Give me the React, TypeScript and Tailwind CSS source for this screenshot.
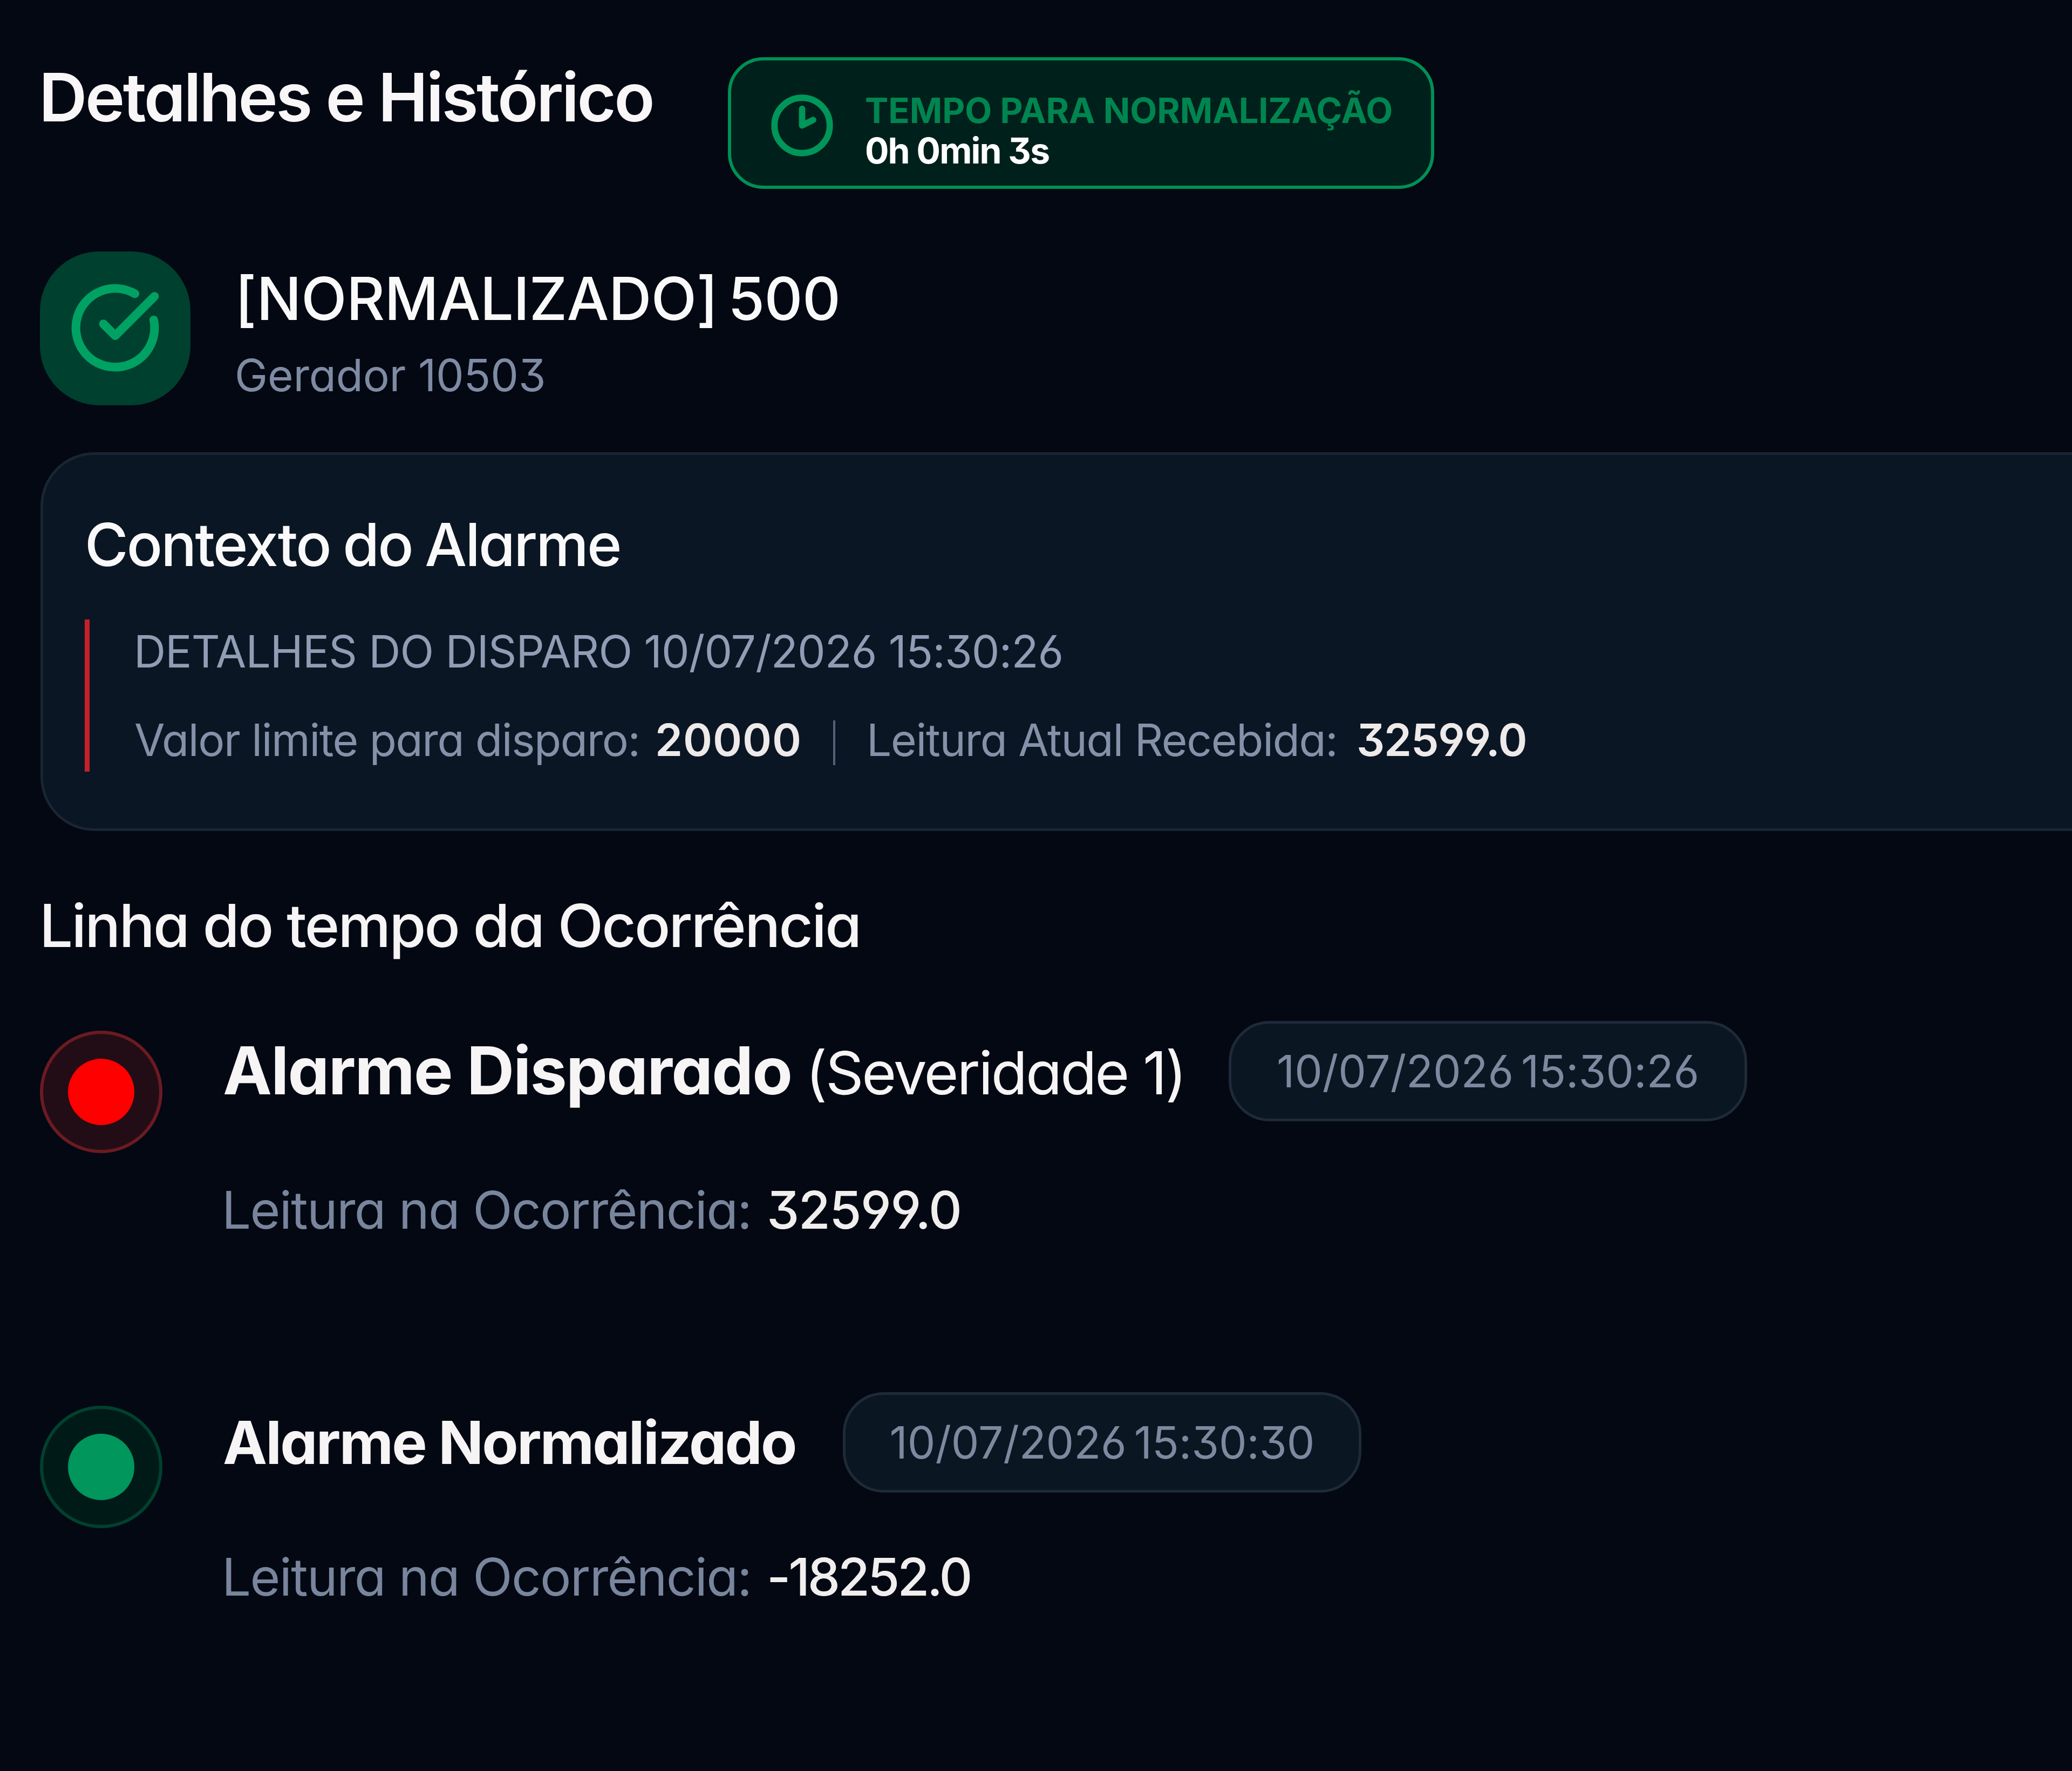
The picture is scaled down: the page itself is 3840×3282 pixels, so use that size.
import React from 'react';
import { CircleCheckBig, Clock2 } from 'lucide-react';

type EventTone = 'fired' | 'normalized';

interface TimelineEvent {
    tone: EventTone;
    title: string;
    severity?: string;
    date: string;
    reading: string;
}

const events: TimelineEvent[] = [
    { tone: 'fired', title: 'Alarme Disparado', severity: '(Severidade 1)', date: '10/07/2026 15:30:26', reading: '32599.0' },
    { tone: 'normalized', title: 'Alarme Normalizado', date: '10/07/2026 15:30:30', reading: '-18252.0' },
];

const Header = () => (
    <header className="flex items-start">
        <h1 className="-ml-[3px] w-[1277px] shrink-0 text-[124px] leading-[148px] font-semibold tracking-[-3.6px] text-[#f8f6f6]">
            Detalhes e Histórico
        </h1>
        <div className="flex h-[244px] w-[1309px] items-start gap-[55px] rounded-[66px] border-[6px] border-[#009055] bg-[#00201b] pl-[70px]">
            <Clock2 className="mt-[59px] size-[123px] shrink-0 text-[#009559]" strokeWidth={2.3} />
            <div className="pt-[55px]">
                <div className="text-[65px] leading-[75px] font-bold tracking-[-0.1px] text-[#008550]">TEMPO PARA NORMALIZAÇÃO</div>
                <div className="text-[66px] leading-[75px] font-bold tracking-[-1.9px] text-white">0h 0min 3s</div>
            </div>
        </div>
    </header>
);

const AlarmSummary = () => (
    <div className="mt-[116px] -ml-px flex gap-[82px]">
        <div className="flex h-[285px] w-[279px] shrink-0 items-center justify-center rounded-[110px] bg-[#00402e]">
            <CircleCheckBig className="mb-[2px] size-[175px] text-[#00a263]" strokeWidth={2.2} />
        </div>
        <div>
            <h2 className="text-[110px] leading-[175px] font-medium tracking-[-0.6px] [word-spacing:-10px] text-[#faf9f9]">
                [NORMALIZADO] 500
            </h2>
            <p className="text-[82px] leading-[109px] tracking-[-0.25px] text-[#7f8ba3]">Gerador 10503</p>
        </div>
    </div>
);

const AlarmContext = () => (
    <section className="mt-[87px] h-[702px] rounded-l-[100px] border-y-[5px] border-l-[5px] border-[#192533] bg-[#0b1624] pt-[106px] pl-[77px]">
        <h2 className="text-[110px] leading-[120px] font-medium tracking-[-2.9px] [word-spacing:-3px] text-[#faf9f9]">Contexto do Alarme</h2>
        <div className="mt-[79px] h-[282px] border-l-[9px] border-[#c5202b] pl-[82px] text-[82px] leading-[120px]">
            <p className="tracking-[-0.9px] text-[#909db4]">DETALHES DO DISPARO 10/07/2026 15:30:26</p>
            <div className="mt-[44px] ml-px flex items-center text-[#8491a8]">
                <span className="w-[965px] shrink-0 tracking-[-1.4px]">Valor limite para disparo:</span>
                <span className="w-[330px] shrink-0 font-semibold tracking-[0.9px] text-[#eeeaea]">20000</span>
                <span className="mt-[8px] h-[83px] w-[4px] shrink-0 bg-[#566174]" />
                <span className="ml-[58px] w-[908px] shrink-0 tracking-[-1.35px]">Leitura Atual Recebida:</span>
                <span className="font-semibold tracking-[-1.2px] text-[#eeeaea]">32599.0</span>
            </div>
        </div>
    </section>
);

const EventMarker: React.FC<{ tone: EventTone }> = ({ tone }) => (
    <div
        className={`flex size-[227px] shrink-0 items-center justify-center rounded-full border-[6px] ${
            tone === 'fired' ? 'mt-[18px] border-[#6c1a22] bg-[#220d16]' : 'mt-[25px] border-[#00412e] bg-[#001a18]'
        }`}
    >
        <div className={`size-[123px] rounded-full ${tone === 'fired' ? 'bg-[#ff0000]' : 'bg-[#00965c]'}`} />
    </div>
);

const EventRow: React.FC<{ event: TimelineEvent }> = ({ event }) => (
    <li className="-ml-px flex gap-[112px]">
        <EventMarker tone={event.tone} />
        <div>
            <div className="flex items-center">
                <h3 className="flex items-baseline text-[#f6f4f4]">
                    {event.severity ? (
                        <>
                            <span className="w-[1080px] shrink-0 text-[122px] leading-[152px] font-bold tracking-[-1.8px]">{event.title}</span>
                            <span className="w-[784px] shrink-0 text-[110px] leading-[150px] tracking-[-3.2px]">{event.severity}</span>
                        </>
                    ) : (
                        <span className="w-[1149px] shrink-0 text-[110px] leading-[150px] font-bold tracking-[-2.8px]">{event.title}</span>
                    )}
                </h3>
                <span className="flex h-[186px] w-[961px] items-center justify-center rounded-[76px] border-[5px] border-[#1f2a38] bg-[#0b1623] text-[82px] tracking-[-0.1px] [word-spacing:-9px] text-[#7d899f]">
                    {event.date}
                </span>
            </div>
            <p className={`-ml-[2px] flex text-[96px] leading-[120px] ${event.tone === 'fired' ? 'mt-[104px]' : 'mt-[96px]'}`}>
                <span className="w-[1010px] shrink-0 tracking-[-1.75px] text-[#78859c]">Leitura na Ocorrência:</span>
                <span className={`font-medium text-[#f1eeee] ${event.tone === 'fired' ? 'tracking-[-1.6px]' : 'tracking-[-4.2px]'}`}>
                    {event.reading}
                </span>
            </p>
        </div>
    </li>
);

export default function App() {
    return (
        <main className="h-[3282px] w-[3840px] overflow-hidden bg-[#030813] pt-[106px] pl-[75px] font-['Inter',sans-serif] whitespace-nowrap [font-feature-settings:'cv11','cv09','cv03','cv04']">
            <Header />
            <AlarmSummary />
            <AlarmContext />
            <h2 className="mt-[115px] -ml-[2px] text-[110px] leading-[120px] font-medium tracking-[-2.8px] text-[#f6f4f4]">
                Linha do tempo da Ocorrência
            </h2>
            <ul className="mt-[117px] flex flex-col gap-[278px]">
                {events.map((event) => (
                    <EventRow key={event.date} event={event} />
                ))}
            </ul>
        </main>
    );
}
